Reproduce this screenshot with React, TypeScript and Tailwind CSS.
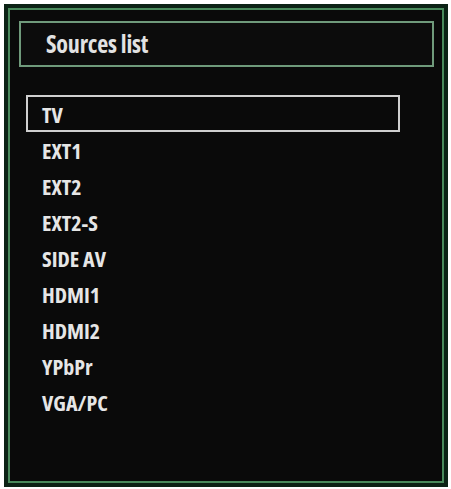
const SOURCES = ['TV', 'EXT1', 'EXT2', 'EXT2-S', 'SIDE AV', 'HDMI1', 'HDMI2', 'YPbPr', 'VGA/PC']

export default function App() {
  const selected = 'TV'

  return (
    <div className="w-[451px] h-[489px] bg-white pt-1 pl-1 font-['Open_Sans',sans-serif] [font-stretch:condensed]">
      <div className="w-[444px] h-[483px] bg-[#0c2215] p-[4px] flex">
        <div className="flex-1 border-2 border-[#4a8a5c] bg-[#0a0a0a] flex flex-col pt-[11px] pl-[9px] pr-[8px]">
          <div className="h-[46px] border-2 border-[#6f9a7b] bg-[#0c0c0c] flex items-center pl-[25px]">
            <span className="text-[24px] font-bold text-[#e2e2e2] tracking-[-0.2px] leading-none">Sources list</span>
          </div>

          <ul className="mt-[28px] ml-[7px] w-[374px] flex flex-col">
            {SOURCES.map(s => (
              <li
                key={s}
                className={`h-[36px] flex items-center pl-[14px] border-2 ${
                  s === selected ? 'h-[37px] border-[#cfcfcf]' : 'border-transparent'
                }`}
              >
                <span className="text-[22px] font-bold text-[#e6e6e6] leading-none">{s}</span>
              </li>
            ))}
          </ul>
        </div>
      </div>
    </div>
  )
}
